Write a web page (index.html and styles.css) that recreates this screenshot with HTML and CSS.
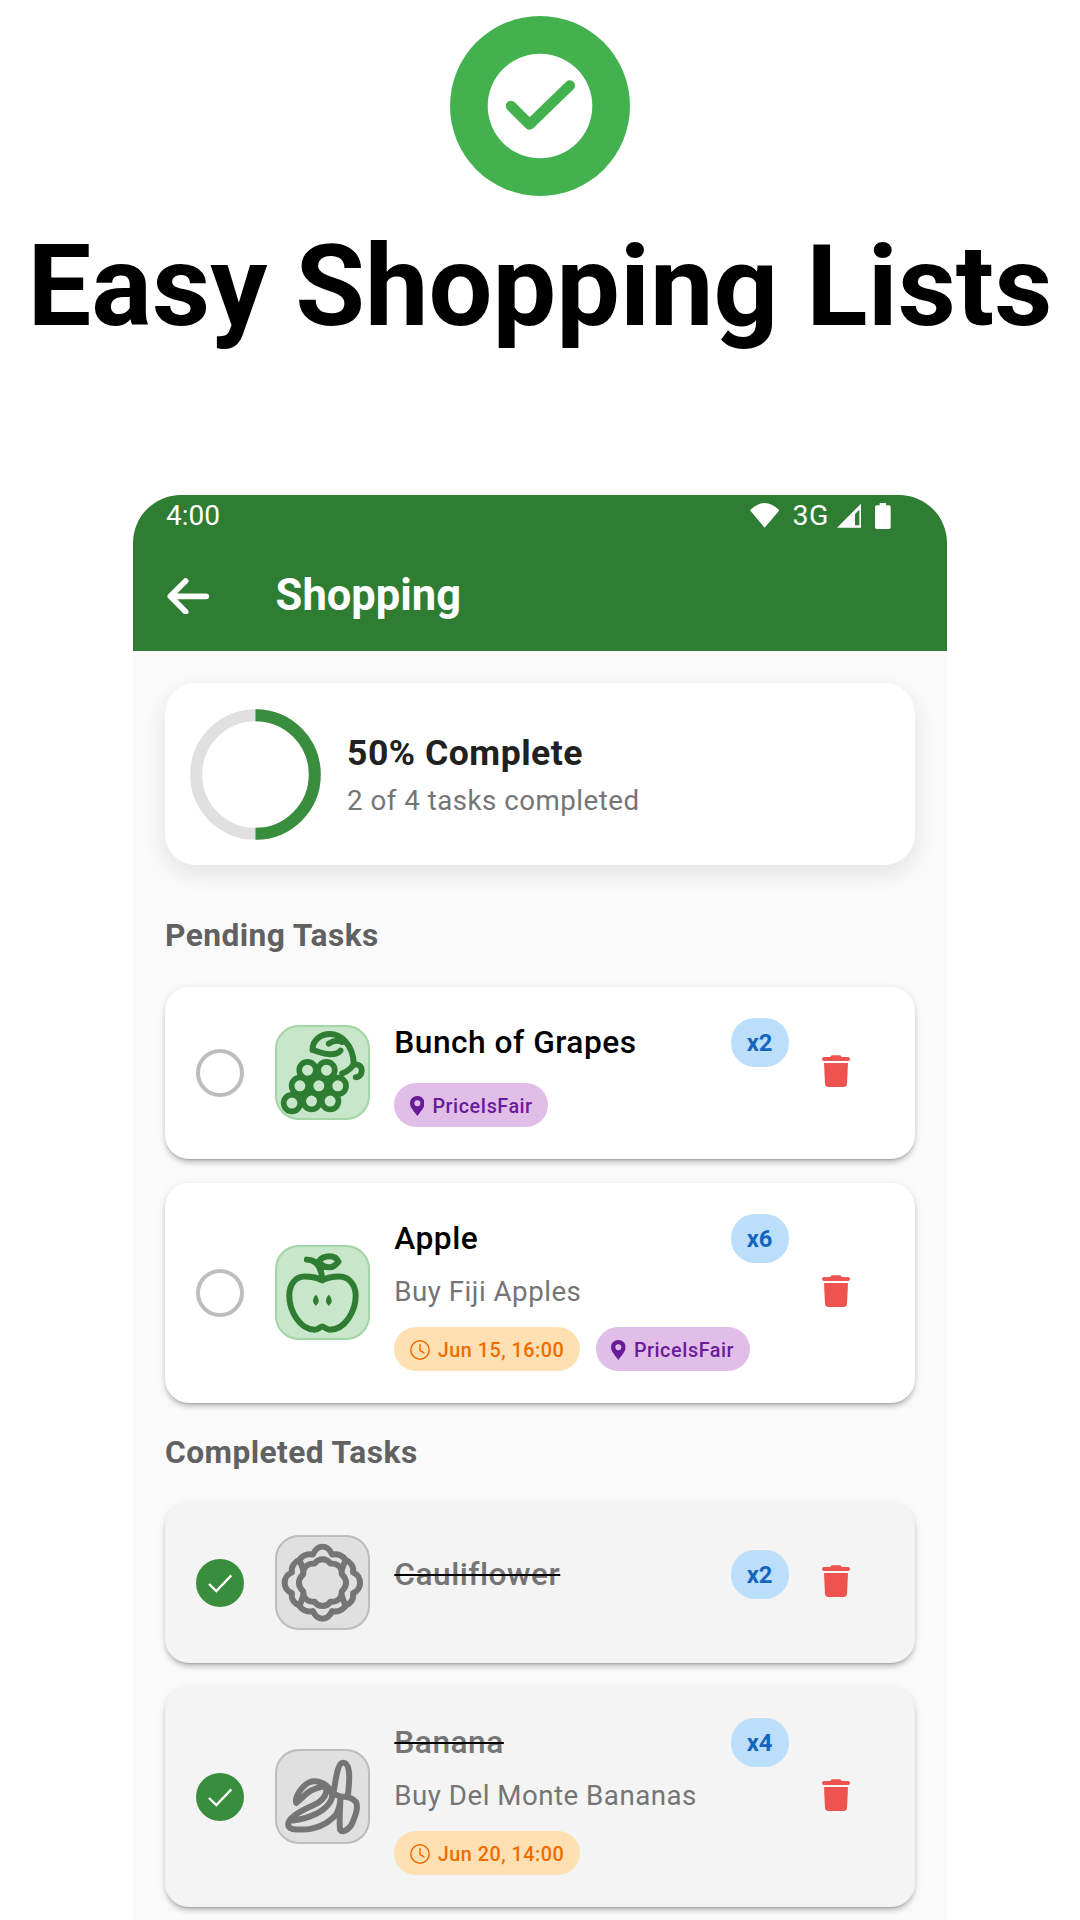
FILE: index.html
```html
<!DOCTYPE html>
<html lang="en">
<head>
<meta charset="utf-8">
<title>Easy Shopping Lists</title>
<link rel="stylesheet" href="styles.css">
</head>
<body>
<svg class="defs" aria-hidden="true">
  <symbol id="trash" viewBox="0 0 84 96"><path d="M25 6Q26 1 31 1H53Q58 1 59 6H78Q84 6 84 12T78 18H6Q0 18 0 12T6 6ZM6 24H78L75 88Q74 96 67 96H17Q10 96 9 88Z"/></symbol>
  <symbol id="pin" viewBox="0 0 44 60"><path fill-rule="evenodd" d="M22 0C34 0 44 9 44 22C44 36 30 48 22 60C14 48 0 36 0 22C0 9 10 0 22 0ZM22 13A9 9 0 1 0 22 31A9 9 0 1 0 22 13Z"/></symbol>
  <symbol id="clock" viewBox="0 0 60 60"><circle cx="30" cy="30" r="27.5"/><path d="M30 13V32L43 39"/></symbol>
  <symbol id="tick" viewBox="0 0 144 144"><path d="M39 75L61 96L106 49"/></symbol>
</svg>
<header class="hero">
  <svg class="hero-mark" viewBox="0 0 180 180"><circle cx="90" cy="90" r="90" fill="#43b14e"/><circle cx="90" cy="90" r="52.3" fill="#fff"/><path d="M61 90L79.6 108.5L119.8 69.5" fill="none" stroke="#43b14e" stroke-width="10.5" stroke-linecap="round" stroke-linejoin="round"/></svg>
  <h1 class="hero-title">Easy Shopping Lists</h1>
</header>
<main class="phone">
  <div class="status">
    <span class="time">4:00</span>
    <span class="status-icons">
      <svg class="wifi" viewBox="0 0 88 74"><path d="M0 22Q44 -22 88 22L44 74Z"/></svg>
      <span class="net">3G</span>
      <svg class="signal" viewBox="0 0 74 74"><path fill-rule="evenodd" d="M0 74L74 0V74ZM54 33V67H67V20Z"/></svg>
      <svg class="battery" viewBox="0 0 47 78"><path d="M14 0H33V7H42Q47 7 47 12V73Q47 78 42 78H5Q0 78 0 73V12Q0 7 5 7H14Z"/></svg>
    </span>
  </div>
  <div class="appbar">
    <svg class="back" viewBox="0 0 126 110"><path d="M118 55H12M56 9L10 55L56 101"/></svg>
    <span class="appbar-title">Shopping</span>
  </div>
  <div class="content">
    <section class="progress">
      <svg class="ring" viewBox="0 0 131 131"><circle cx="65.5" cy="65.5" r="59.3" stroke="#e0e0e0"/><path d="M65.5 6.2A59.3 59.3 0 0 1 65.5 124.8" stroke="#388e3c"/></svg>
      <div class="progress-text">
        <div class="progress-title">50% Complete</div>
        <div class="progress-sub">2 of 4 tasks completed</div>
      </div>
    </section>

    <h2 class="section pending">Pending Tasks</h2>
    <article class="card">
      <span class="check"></span>
      <span class="thumb"><svg viewBox="16 29 286 286"><g stroke-width="17"><circle cx="114" cy="165" r="25"/><circle cx="171" cy="165" r="25"/><circle cx="91" cy="212" r="25"/><circle cx="148" cy="212" r="25"/><circle cx="205" cy="212" r="25"/><circle cx="67" cy="264" r="25"/><circle cx="126" cy="258" r="25"/><circle cx="182" cy="258" r="25"/></g><path d="M129 104C128 76 152 56 182 56C214 56 251 88 253 145C248 158 236 168 218 175M178 85C190 76 205 74 218 80M129 104C150 110 160 117 182 117C196 117 208 114 213 106M253 147C264 146 277 150 277 166C277 180 268 187 259 186"/></svg></span>
      <div class="body">
        <div class="row"><span class="name">Bunch of Grapes</span><span class="qty">x2</span></div>
        <div class="chips"><span class="chip store"><svg class="pin"><use href="#pin"/></svg><span>PriceIsFair</span></span></div>
      </div>
      <svg class="trash"><use href="#trash"/></svg>
    </article>
    <article class="card">
      <span class="check"></span>
      <span class="thumb"><svg viewBox="376 223 286 286"><path d="M518 330C502 320 488 318 465 318C435 318 419 345 419 375C419 420 450 478 495 478C508 478 512 468 518 468C524 468 530 478 541 478C588 478 619 420 619 375C619 345 600 318 570 318C548 318 534 320 518 330ZM518 325C516 300 508 268 472 267M508 272C515 262 526 257 540 257C555 257 564 266 567 273C558 285 550 290 540 290C526 290 515 283 508 272"/><path class="solid" d="M499 373Q508 381 508 390T499 407Q490 399 490 390T499 373ZM538 373Q547 381 547 390T538 407Q529 399 529 390T538 373Z"/></svg></span>
      <div class="body">
        <div class="row"><span class="name">Apple</span><span class="qty">x6</span></div>
        <div class="note">Buy Fiji Apples</div>
        <div class="chips"><span class="chip due"><svg class="clock"><use href="#clock"/></svg><span>Jun 15, 16:00</span></span><span class="chip store"><svg class="pin"><use href="#pin"/></svg><span>PriceIsFair</span></span></div>
      </div>
      <svg class="trash"><use href="#trash"/></svg>
    </article>

    <h2 class="section completed">Completed Tasks</h2>
    <article class="card done">
      <span class="check"><svg><use href="#tick"/></svg></span>
      <span class="thumb"><svg viewBox="376 135 286 286"><path d="M490 194C497 178 505 170 519 170C533 170 541 178 548 194C565 190 582 198 588 210C604 216 614 230 611 248C625 253 632 266 632 279C632 292 625 305 611 310C614 328 604 342 588 348C582 360 565 368 548 364C541 380 533 387 519 387C505 387 497 380 490 364C473 368 456 360 450 348C434 342 424 328 427 310C413 305 405 292 405 279C405 266 413 253 427 248C424 230 434 216 450 210C456 198 473 190 490 194Z"/><path d="M495 221C502 211 510 208 519 208C528 208 536 211 543 221C560 220 578 228 577 253C586 262 590 270 590 279C590 288 586 296 577 305C578 328 560 338 543 336C536 346 528 349 519 349C510 349 502 346 495 336C478 338 460 328 461 305C452 296 448 288 448 279C448 270 452 262 461 253C460 228 478 220 495 221Z"/><path d="M588 210L577 240M450 210L461 240M588 348L577 318M450 348L461 318"/></svg></span>
      <div class="body">
        <div class="row"><span class="name">Cauliflower</span><span class="qty">x2</span></div>
        <div class="chips"></div>
      </div>
      <svg class="trash"><use href="#trash"/></svg>
    </article>
    <article class="card done">
      <span class="check"><svg><use href="#tick"/></svg></span>
      <span class="thumb"><svg viewBox="16 25 286 286"><path d="M193 152C200 110 205 66 221 66C240 66 243 100 236 160M213 168C213 200 208 240 212 268C222 282 245 260 250 245C262 215 266 200 260 185C250 172 230 168 213 168M80 187C74 170 100 130 125 123C150 118 175 130 188 160M80 187C95 178 105 160 125 150C140 143 155 138 165 138M170 140C175 165 155 185 130 195C100 208 65 225 57 245C52 262 65 268 85 267C130 270 170 255 200 222C210 205 213 190 213 168M188 158C192 180 170 205 140 220C115 232 90 238 70 240M188 158L213 168"/></svg></span>
      <div class="body">
        <div class="row"><span class="name">Banana</span><span class="qty">x4</span></div>
        <div class="note">Buy Del Monte Bananas</div>
        <div class="chips"><span class="chip due"><svg class="clock"><use href="#clock"/></svg><span>Jun 20, 14:00</span></span></div>
      </div>
      <svg class="trash"><use href="#trash"/></svg>
    </article>
  </div>
</main>
</body>
</html>
```
FILE: styles.css
```css
* { box-sizing: border-box; }
body { margin: 0; width: 1080px; height: 1920px; overflow: hidden; background: #fff; font-family: Roboto, "Liberation Sans", sans-serif; }
svg { display: block; flex: none; }
.defs { position: absolute; width: 0; height: 0; }

.hero { height: 495px; padding-top: 16.4px; display: flex; flex-direction: column; align-items: center; }
.hero-mark { width: 180px; height: 180px; }
.hero-title { margin: 23.6px 0 0; font-size: 113.3px; line-height: 134px; font-weight: 700; white-space: nowrap; color: #000; }

.phone { width: 814px; height: 1425px; margin: 0 auto; background: #fafafa; border-radius: 48px 48px 0 0; overflow: hidden; }
.status { height: 48px; padding: 0 56px 0 33px; background: #2e7d32; color: #fff; display: flex; justify-content: space-between; align-items: flex-start; }
.time { font-size: 28px; line-height: 42px; }
.status-icons { display: flex; align-items: flex-start; fill: #fff; }
.wifi { width: 29.3px; height: 24.7px; margin: 8px 13.5px 0 0; }
.net { font-size: 28.5px; line-height: 42px; letter-spacing: .3px; }
.signal { width: 24.7px; height: 24.7px; margin: 8px 14px 0 8px; }
.battery { width: 15.7px; height: 26px; margin-top: 8px; }

.appbar { height: 108px; padding: 0 34px 2px; background: #2e7d32; color: #fff; display: flex; align-items: center; }
.back { width: 42px; height: 36.7px; margin: 0 66.6px 0 0; fill: none; stroke: #fff; stroke-width: 17; stroke-linecap: round; stroke-linejoin: round; }
.appbar-title { font-size: 43.5px; line-height: 50px; font-weight: 700; }

.content { padding: 32px 32px 0; }
.progress { height: 182px; padding-left: 25px; display: flex; align-items: center; gap: 26px; background: #fff; border-radius: 31px; box-shadow: 0 8px 24px rgba(0, 0, 0, .1); }
.ring { width: 131px; height: 131px; fill: none; stroke-width: 12; }
.progress-text { padding-top: 2px; }
.progress-title { font-size: 35.6px; line-height: 48px; font-weight: 700; color: #212121; letter-spacing: .5px; }
.progress-sub { margin-top: 4px; font-size: 27.7px; line-height: 40px; color: #757575; letter-spacing: .5px; }

.section { margin: 0; font-size: 31.7px; line-height: 48px; font-weight: 700; color: #616161; letter-spacing: .45px; }
.pending { padding: 47px 0 27px; }
.completed { padding: 26px 0; }

.card { min-height: 160px; padding: 31px 65px 32px 31px; display: flex; align-items: center; background: #fff; border-radius: 24px; box-shadow: 0 3px 2px -2px rgba(0, 0, 0, .2), 0 4px 4px rgba(0, 0, 0, .14), 0 2px 8px rgba(0, 0, 0, .1); }
.card + .card { margin-top: 24px; }
.done { background: #f4f4f4; }
.check { flex: none; width: 48px; height: 48px; border: 4px solid #bdbdbd; border-radius: 50%; }
.done .check { border: 0; background: #388e3c; }
.check svg { width: 48px; height: 48px; fill: none; stroke: #fff; stroke-width: 7; }
.thumb { flex: none; width: 95px; height: 95px; margin: 0 24px 0 31.3px; border-radius: 24px; background: #c8e6c9; box-shadow: inset 0 0 0 2px #a5d6a7; }
.thumb svg { width: 100%; height: 100%; fill: none; stroke: #2e7d32; stroke-width: 18; stroke-linecap: round; stroke-linejoin: round; }
.thumb .solid { fill: #2e7d32; stroke: none; }
.done .thumb { background: #e0e0e0; box-shadow: inset 0 0 0 2px #bdbdbd; }
.done .thumb svg { stroke: #757575; }
.body { flex: 1; }
.row { height: 49px; display: flex; align-items: center; justify-content: space-between; }
.name { font-size: 31.7px; line-height: 48px; font-weight: 500; color: #000; letter-spacing: .5px; }
.done .name { color: #757575; text-decoration: line-through #000 1.6px; }
.qty { width: 58px; height: 49px; border-radius: 24px; background: #bbdefb; color: #1565c0; font-size: 23.8px; line-height: 50px; font-weight: 700; text-align: center; }
.note { margin-top: 9px; font-size: 27.7px; line-height: 40px; color: #757575; letter-spacing: .5px; }
.chips { margin-top: 16px; display: flex; gap: 16px; }
.note + .chips { margin-top: 15px; }
.chip { height: 44px; padding: 2px 15.5px 0; display: flex; align-items: center; border-radius: 22px; font-size: 19.8px; line-height: 42px; font-weight: 500; letter-spacing: .5px; white-space: nowrap; }
.chip span { padding-top: 1px; }
.store { background: #e1bee7; color: #6a1b9a; }
.due { background: #ffe0b2; color: #ef6c00; }
.pin { width: 14.7px; height: 20px; margin-right: 8px; fill: #6a1b9a; }
.clock { width: 20px; height: 20px; margin-right: 8px; fill: none; stroke: #ef6c00; stroke-width: 4.5; }
.trash { width: 28px; height: 32px; margin: -3px 0 0 33.4px; fill: #ef5350; }
```
